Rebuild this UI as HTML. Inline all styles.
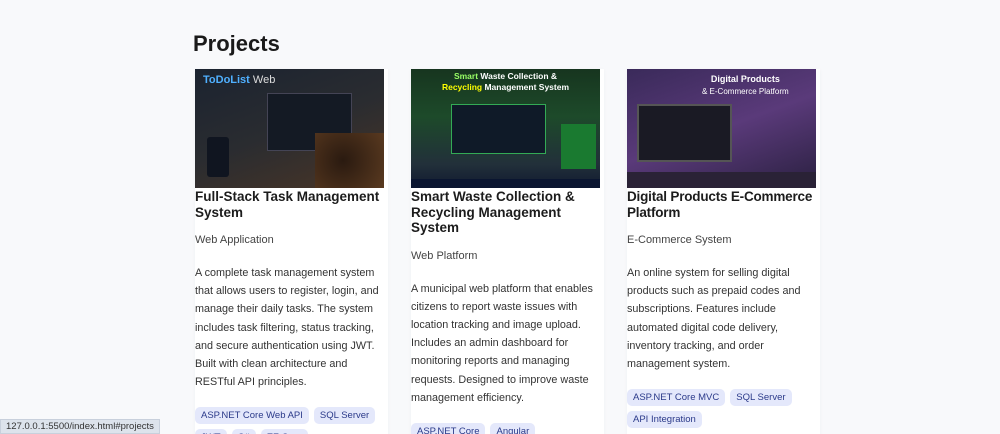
<!DOCTYPE html>
<html><head><meta charset="utf-8"><style>
*{margin:0;padding:0;box-sizing:border-box}
html,body{width:1000px;height:434px;overflow:hidden}
body{background:#f8f9fb;font-family:"Liberation Sans","DejaVu Sans",sans-serif;color:#222;position:relative}
h1{position:absolute;left:193px;top:31px;font-size:22px;font-weight:700;color:#1a1a1a}
.card{position:absolute;top:69px;width:193px;height:380px;background:#fff;box-shadow:0 1px 4px rgba(0,0,0,.04)}
.img{width:189px;height:119px;position:relative;overflow:hidden}
.t{font-size:13.5px;font-weight:700;line-height:15.5px;color:#1c1c1c;margin-top:1px;width:189px}
.sub{font-size:11px;color:#444;margin-top:14px}
.d{font-size:10.8px;color:#333;line-height:18.2px;margin-top:18px;width:189px}
.tags{margin-top:16px;display:flex;flex-wrap:wrap;gap:5px 5px;width:189px}
.tag{background:#e4e8fb;color:#2b3a8a;font-size:9.5px;padding:3px 6px;border-radius:5px}
.status{position:absolute;left:0;top:419px;height:15px;background:#dde3ec;border:1px solid #c8d0dc;font-size:9.5px;color:#333;padding:1px 5px}
</style></head><body>
<h1>Projects</h1>

<div class="card" style="left:195px">
<div class="img" style="background:linear-gradient(160deg,#1b2330,#2a2c30 50%,#4a3526)">
<div style="position:absolute;left:8px;top:5px;color:#4fb0ff;font-size:11px;font-weight:700">ToDoList <span style="color:#ddd;font-weight:400">Web</span></div>
<div style="position:absolute;left:72px;top:24px;width:85px;height:58px;background:#141a24;border:1px solid #445"></div>
<div style="position:absolute;left:120px;top:64px;width:70px;height:55px;background:radial-gradient(circle at 40% 50%,#2a1a10,#5a3a20)"></div>
<div style="position:absolute;left:12px;top:68px;width:22px;height:40px;background:#101520;border-radius:3px"></div>
</div>
<div class="t">Full-Stack Task Management System</div>
<div class="sub">Web Application</div>
<div class="d">A complete task management system that allows users to register, login, and manage their daily tasks. The system includes task filtering, status tracking, and secure authentication using JWT. Built with clean architecture and RESTful API principles.</div>
<div class="tags"><span class="tag">ASP.NET Core Web API</span><span class="tag">SQL Server</span><span class="tag">JWT</span><span class="tag">C#</span><span class="tag">EF Core</span></div>
</div>

<div class="card" style="left:411px">
<div class="img" style="background:linear-gradient(180deg,#17351f,#1d4a2a 40%,#22303a 80%,#111a30)">
<div style="position:absolute;left:0;width:189px;top:2px;text-align:center;color:#fff;font-size:8.5px;font-weight:700;line-height:11px"><span style="color:#9f6">Smart</span> Waste Collection &amp;<br><span style="color:#ff0">Recycling</span> Management System</div>
<div style="position:absolute;left:40px;top:35px;width:95px;height:50px;background:#0f1a28;border:1px solid #3a5"></div>
<div style="position:absolute;left:150px;top:55px;width:35px;height:45px;background:#1a7a30"></div>
<div style="position:absolute;left:0;top:110px;width:189px;height:9px;background:#0a1530"></div>
</div>
<div class="t">Smart Waste Collection &amp; Recycling Management System</div>
<div class="sub">Web Platform</div>
<div class="d">A municipal web platform that enables citizens to report waste issues with location tracking and image upload. Includes an admin dashboard for monitoring reports and managing requests. Designed to improve waste management efficiency.</div>
<div class="tags"><span class="tag">ASP.NET Core</span><span class="tag">Angular</span></div>
</div>

<div class="card" style="left:627px">
<div class="img" style="background:linear-gradient(160deg,#3a2a5a,#5a3a7a 50%,#2a2040)">
<div style="position:absolute;left:75px;top:4px;color:#fff;font-size:9px;font-weight:700;text-align:center;line-height:12px">Digital Products<br><span style="font-weight:400;font-size:8px">&amp; E-Commerce Platform</span></div>
<div style="position:absolute;left:10px;top:35px;width:95px;height:58px;background:#1a1a24;border:2px solid #555"></div>
<div style="position:absolute;left:0;top:103px;width:189px;height:16px;background:#2a2236"></div>
</div>
<div class="t" style="letter-spacing:-0.2px">Digital Products E&#8209;Commerce Platform</div>
<div class="sub">E-Commerce System</div>
<div class="d">An online system for selling digital products such as prepaid codes and subscriptions. Features include automated digital code delivery, inventory tracking, and order management system.</div>
<div class="tags"><span class="tag">ASP.NET Core MVC</span><span class="tag">SQL Server</span><span class="tag">API Integration</span></div>
</div>

<div class="status">127.0.0.1:5500/index.html#projects</div>
</body></html>
